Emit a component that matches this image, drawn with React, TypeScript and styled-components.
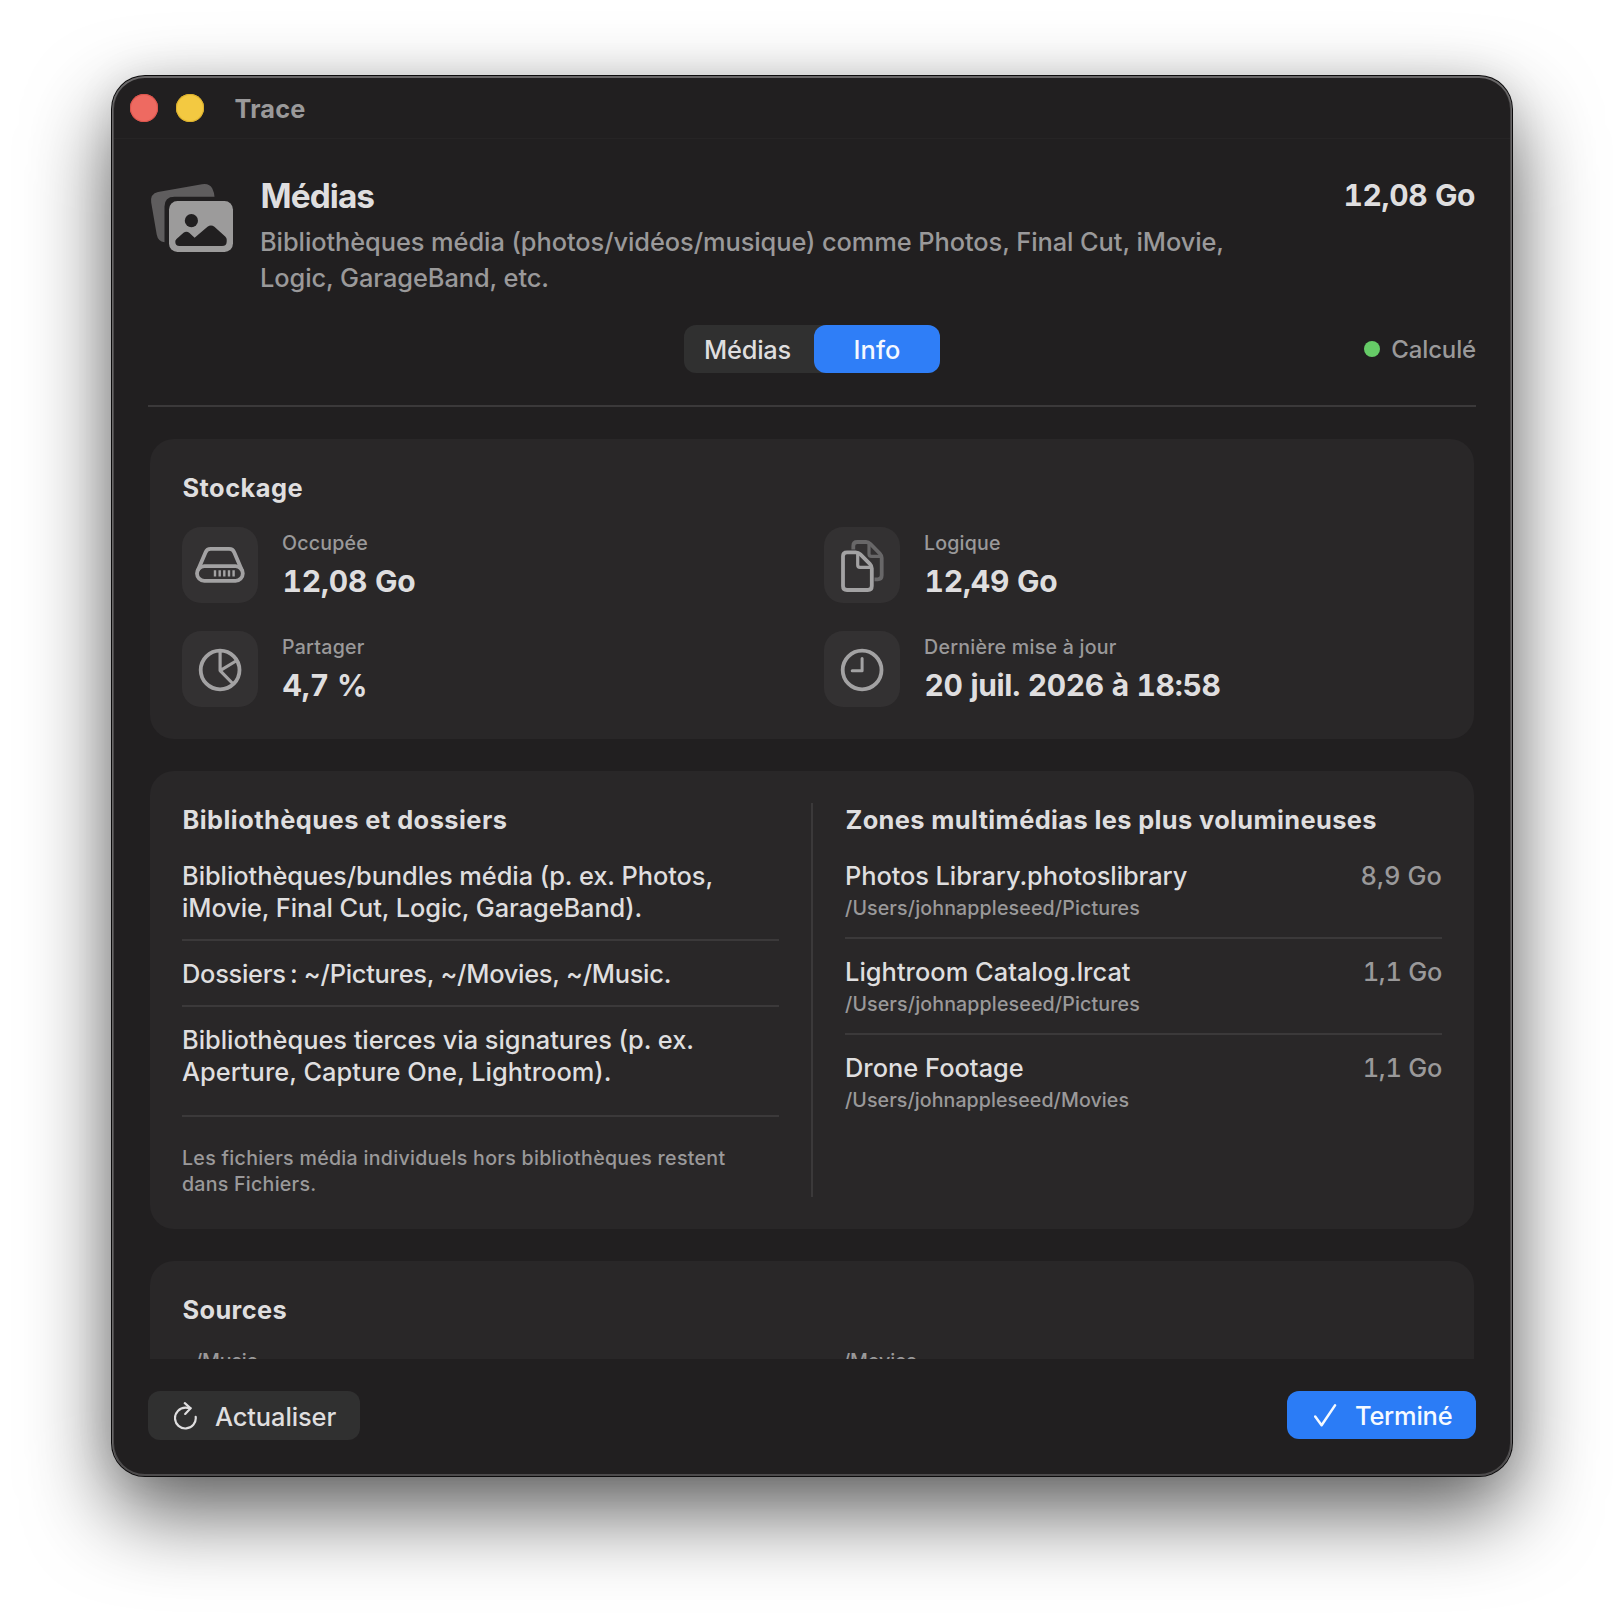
import React from "react";
import styled, { createGlobalStyle } from "styled-components";

const color = {
  window: "#211f20",
  card: "#292728",
  tile: "#333132",
  line: "#3b393a",
  control: "#303030",
  text: "#dfdedf",
  muted: "#9a999a",
  icon: "#a3a2a3",
  accent: "#2f7ef7",
};

const GlobalStyle = createGlobalStyle`
  *, *::before, *::after { box-sizing: border-box; }
  body {
    margin: 0;
    background: #fff;
    color: ${color.text};
    font-family: Inter, "Liberation Sans", sans-serif;
    font-size: 25.4px;
    font-weight: 460;
    line-height: 32px;
    overflow: hidden;
  }
  svg { display: block; flex: none; }
`;

const Desktop = styled.main`
  width: 1624px;
  height: 1624px;
  padding: 76px 112px 148px;
`;

const Window = styled.section`
  width: 1400px;
  height: 1400px;
  display: flex;
  flex-direction: column;
  border-radius: 33px;
  background: ${color.window};
  box-shadow:
    inset 0 1px 0 1px rgba(255, 255, 255, 0.16),
    inset 0 0 0 2px rgba(255, 255, 255, 0.2),
    0 0 0 1px #0c0b0c,
    0 0 40px rgba(0, 0, 0, 0.08),
    0 36px 84px rgba(0, 0, 0, 0.63);
`;

const TitleBar = styled.header`
  height: 63px;
  margin: 0 2px;
  padding: 2px 0 0 16px;
  display: flex;
  align-items: center;
  gap: 18px;
  border-bottom: 1px solid #262425;
`;

const Light = styled.span<{ $fill: string; $edge: string }>`
  width: 28px;
  height: 28px;
  border-radius: 50%;
  background: ${(p) => p.$fill};
  box-shadow: inset 0 0 0 1px ${(p) => p.$edge};
`;

const Text = styled.span<{ $ls?: number }>`
  display: block;
  white-space: pre;
  letter-spacing: ${(p) => p.$ls ?? 0}px;
`;

const AppName = styled(Text)`
  margin-left: 12.5px;
  padding-top: 2px;
  font-size: 25.3px;
  font-weight: 700;
  color: ${color.muted};
`;

const Content = styled.div`
  flex: 1;
  padding: 37px 36px 0;
`;

const Summary = styled.div`
  display: flex;
  gap: 24px;
  height: 120px;
`;

const SummaryIcon = styled.div`
  padding-top: 4px;
`;

const SummaryText = styled.div`
  flex: 1;
`;

const Title = styled(Text)`
  padding-left: 0.6px;
  font-size: 33.4px;
  line-height: 40px;
  font-weight: 660;
`;

const Description = styled.div`
  margin-top: 8px;
  line-height: 36px;
  color: ${color.muted};
`;

const Total = styled(Text)`
  margin: -1px 1px 0 0;
  font-size: 30px;
  line-height: 40px;
  font-weight: 650;
  font-variant-numeric: tabular-nums;
`;

const Toolbar = styled.div`
  margin-top: 29px;
  display: grid;
  grid-template-columns: 1fr auto 1fr;
  align-items: center;
`;

const Segments = styled.div`
  grid-column: 2;
  display: flex;
  height: 48px;
  border-radius: 12px;
  background: ${color.control};
`;

const Segment = styled.div<{ $active?: boolean }>`
  width: ${(p) => (p.$active ? 126 : 130)}px;
  padding: 1px 3px 0 0;
  display: flex;
  align-items: center;
  justify-content: center;
  border-radius: 12px;
  ${(p) => p.$active && `background: ${color.accent}; color: #f4f8ff; padding-right: 0;`}
`;

const Status = styled.div`
  justify-self: end;
  display: flex;
  align-items: center;
  gap: 11px;
  font-size: 24px;
  color: ${color.muted};
`;

const StatusLabel = styled(Text)`
  padding-top: 1px;
`;

const Dot = styled.span`
  width: 16px;
  height: 16px;
  border-radius: 50%;
  background: #66cb67;
`;

const Rule = styled.hr<{ $before: number; $after: number }>`
  height: 2px;
  border: 0;
  margin: ${(p) => p.$before}px 0 ${(p) => p.$after}px;
  background: ${color.line};
`;

const Scroll = styled.div`
  height: 920px;
  margin: 0 2px;
  overflow: hidden;
  display: flex;
  flex-direction: column;
  gap: 32px;
`;

const Card = styled.section`
  flex: none;
  padding: 32px;
  border-radius: 24px;
  background: ${color.card};
`;

const Heading = styled(Text)`
  padding-left: 0.4px;
  line-height: 34px;
  font-weight: 720;
`;

const Stats = styled.div`
  margin-top: 22px;
  display: grid;
  grid-template-columns: 1fr 1fr;
  gap: 28px 24px;
`;

const Stat = styled.div`
  height: 76px;
  display: flex;
  gap: 24px;
`;

const Tile = styled.div`
  width: 76px;
  height: 76px;
  border-radius: 19px;
  background: ${color.tile};
  color: ${color.icon};
`;

const StatText = styled.div`
  padding-top: 3px;
`;

const Caption = styled(Text)`
  font-size: 19.6px;
  line-height: 26px;
  color: ${color.muted};
`;

const StatValue = styled(Text)`
  margin-top: 5px;
  padding-left: 0.5px;
  font-size: 30px;
  line-height: 40px;
  font-weight: 660;
  font-variant-numeric: tabular-nums;
`;

const SplitCard = styled(Card)`
  display: flex;
  gap: 32px;
`;

const Column = styled.div`
  flex: 1;
`;

const VerticalRule = styled.div`
  width: 2px;
  background: ${color.line};
`;

const Body = styled.div`
  padding-top: 23px;
`;

const Area = styled.div`
  display: flex;
  justify-content: space-between;
`;

const AreaPath = styled(Caption)`
  margin-top: 3px;
`;

const AreaSize = styled(Text)`
  color: ${color.muted};
  font-variant-numeric: tabular-nums;
`;

const Sources = styled.div`
  margin-top: 21px;
  display: grid;
  grid-template-columns: 1fr 1fr;
  gap: 36px;
`;

const Footer = styled.footer`
  margin-top: 32px;
  display: flex;
  justify-content: space-between;
  align-items: flex-start;
`;

const Button = styled.button<{ $primary?: boolean }>`
  width: ${(p) => (p.$primary ? 189 : 212)}px;
  height: ${(p) => (p.$primary ? 48 : 49)}px;
  padding: 0 0 0 ${(p) => (p.$primary ? 27 : 26)}px;
  display: flex;
  align-items: center;
  gap: ${(p) => (p.$primary ? 18 : 17)}px;
  border: 0;
  border-radius: 12px;
  font: inherit;
  background: ${(p) => (p.$primary ? "#2b7cf6" : color.control)};
  color: ${(p) => (p.$primary ? "#f6faff" : color.text)};
`;

const ButtonLabel = styled(Text)<{ $drop: number }>`
  padding-top: ${(p) => p.$drop}px;
`;

const PhotosIcon = () => (
  <svg width="88" height="76" viewBox="148 180 88 76">
    <path
      fill="#5f5d5e"
      d="M214.5 196.7H174.5Q164.5 196.7 164.5 206.5V242.3Q158 241.5 156.7 234.5L151.2 202.5Q150 193.8 158 192L202 184.2Q209.5 183 212.3 188.5Q214.2 192.5 214.5 196.7Z"
    />
    <rect x="169" y="201" width="64" height="51" rx="8.5" fill="#9c9b9b" />
    <circle cx="191.4" cy="220.7" r="6.6" fill={color.window} />
    <path
      fill={color.window}
      d="M175.3 242Q175 240.5 176.5 239L183.5 232.8Q186.5 230.6 189.5 233L194.6 237.8L207.5 226.8Q211 224.3 214.4 226.8L225.2 236.4Q226.7 237.9 226.7 239.6V241.5Q226.7 246 222 246H179.5Q175.4 246 175.3 242Z"
    />
  </svg>
);

const DriveIcon = () => (
  <svg width="76" height="76" viewBox="0 0 76 76" fill="none" stroke="currentColor" strokeWidth="3.8">
    <rect x="15" y="39.2" width="45.8" height="14.6" rx="7.3" />
    <path d="M15.8 43.5L23.6 25.2Q25 21.9 28.6 21.9H47.2Q50.8 21.9 52.2 25.2L60 43.5" />
    <path strokeWidth="2.4" d="M33 43.3v6.2M37.7 43.3v6.2M42.3 43.3v6.2M47 43.3v6.2M51.6 43.3v6.2" />
  </svg>
);

const PieIcon = () => (
  <svg width="76" height="76" viewBox="0 0 76 76" fill="none" stroke="currentColor" strokeWidth="3.8">
    <circle cx="38.1" cy="39" r="19.4" />
    <path strokeWidth="3.2" strokeLinejoin="round" d="M38.1 20V39.6L54 30M38.1 39.6L51.2 53" />
  </svg>
);

const DocsIcon = () => (
  <svg width="76" height="76" viewBox="0 0 76 76" fill="none" strokeWidth="3.8" strokeLinejoin="round">
    <g stroke="#686768">
      <path d="M29.3 22.5V19Q29.3 15 33.3 15H42Q44.5 15 46.5 17L55.8 26.5Q57.7 28.5 57.7 31V48.3Q57.7 52.3 53.7 52.3H50.5" />
      <path strokeWidth="3.2" d="M45 16.5V27Q45 29.3 47.5 29.3H57" />
    </g>
    <g stroke={color.icon}>
      <path d="M23 25.3H31.6Q34.4 25.3 36.4 27.3L45.8 36.8Q47.8 38.8 47.8 41.6V59Q47.8 63 43.8 63H23Q19 63 19 59V29.3Q19 25.3 23 25.3Z" />
      <path strokeWidth="3.2" d="M33.7 26.5V38Q33.7 40.3 36 40.3H47" />
    </g>
  </svg>
);

const ClockIcon = () => (
  <svg width="76" height="76" viewBox="0 0 76 76" fill="none" stroke="currentColor" strokeWidth="3.8">
    <circle cx="38.1" cy="39" r="19.4" />
    <path strokeWidth="3" strokeLinecap="round" strokeLinejoin="round" d="M38.1 27.4V39.8H28.2" />
  </svg>
);

const RefreshIcon = () => (
  <svg width="24" height="28" viewBox="0 0 24 28" fill="none" stroke="currentColor" strokeWidth="2.2" strokeLinecap="round" strokeLinejoin="round">
    <path d="M21.7 14.8A10.4 10.4 0 1 1 11.4 5.7Q14 5.7 16.4 6.2" />
    <path d="M10.8 1.2L16.6 6.3L11.2 11.9" />
  </svg>
);

const CheckIcon = () => (
  <svg width="23" height="24" viewBox="0 0 23 24" fill="none" stroke="currentColor" strokeWidth="2.5" strokeLinecap="round" strokeLinejoin="round">
    <path d="M1.2 13.6L7.6 22.2L21 2.4" />
  </svg>
);

const stats = [
  { icon: <DriveIcon />, label: "Occupée", labelLs: 0.2, value: "12,08 Go", valueLs: -0.2 },
  { icon: <DocsIcon />, label: "Logique", labelLs: 0.18, value: "12,49 Go", valueLs: -0.2 },
  { icon: <PieIcon />, label: "Partager", labelLs: 0.25, value: "4,7 %", valueLs: -0.1 },
  { icon: <ClockIcon />, label: "Dernière mise à jour", labelLs: 0.24, value: "20 juil. 2026 à 18:58", valueLs: -0.32 },
];

const areas = [
  { name: "Photos Library.photoslibrary", ls: -0.07, path: "/Users/johnappleseed/Pictures", pathLs: 0.14, size: "8,9 Go", sizeLs: 0.1 },
  { name: "Lightroom Catalog.lrcat", ls: 0.03, path: "/Users/johnappleseed/Pictures", pathLs: 0.14, size: "1,1 Go", sizeLs: -0.25 },
  { name: "Drone Footage", ls: 0.02, path: "/Users/johnappleseed/Movies", pathLs: 0.08, size: "1,1 Go", sizeLs: -0.25 },
];

export default function App() {
  return (
    <Desktop>
      <GlobalStyle />
      <Window>
        <TitleBar>
          <Light $fill="#ee6a61" $edge="#dd544c" />
          <Light $fill="#f3c941" $edge="#dcb02c" />
          <AppName $ls={0.2}>Trace</AppName>
        </TitleBar>
        <Content>
          <Summary>
            <SummaryIcon>
              <PhotosIcon />
            </SummaryIcon>
            <SummaryText>
              <Title $ls={-0.95}>Médias</Title>
              <Description>
                <Text $ls={-0.07}>Bibliothèques média (photos/vidéos/musique) comme Photos, Final Cut, iMovie,</Text>
                <Text $ls={-0.08}>Logic, GarageBand, etc.</Text>
              </Description>
            </SummaryText>
            <Total $ls={-0.4}>12,08 Go</Total>
          </Summary>
          <Toolbar>
            <Segments>
              <Segment>
                <Text $ls={-0.2}>Médias</Text>
              </Segment>
              <Segment $active>
                <Text $ls={0.1}>Info</Text>
              </Segment>
            </Segments>
            <Status>
              <Dot />
              <StatusLabel $ls={-0.15}>Calculé</StatusLabel>
            </Status>
          </Toolbar>
          <Rule $before={32} $after={32} />
          <Scroll>
            <Card>
              <Heading $ls={0.5}>Stockage</Heading>
              <Stats>
                {stats.map((s) => (
                  <Stat key={s.label}>
                    <Tile>{s.icon}</Tile>
                    <StatText>
                      <Caption $ls={s.labelLs}>{s.label}</Caption>
                      <StatValue $ls={s.valueLs}>{s.value}</StatValue>
                    </StatText>
                  </Stat>
                ))}
              </Stats>
            </Card>
            <SplitCard>
              <Column>
                <Heading $ls={0.46}>Bibliothèques et dossiers</Heading>
                <Body>
                  <Text $ls={-0.05}>Bibliothèques/bundles média (p. ex. Photos,</Text>
                  <Text $ls={-0.09}>iMovie, Final Cut, Logic, GarageBand).</Text>
                  <Rule $before={15} $after={17} />
                  <Text $ls={-0.26}>{"Dossiers\u202f: ~/Pictures, ~/Movies, ~/Music."}</Text>
                  <Rule $before={15} $after={17} />
                  <Text $ls={-0.03}>Bibliothèques tierces via signatures (p. ex.</Text>
                  <Text $ls={0.02}>Aperture, Capture One, Lightroom).</Text>
                  <Rule $before={27} $after={28} />
                  <Caption $ls={0.29}>Les fichiers média individuels hors bibliothèques restent</Caption>
                  <Caption $ls={0.25}>dans Fichiers.</Caption>
                </Body>
              </Column>
              <VerticalRule />
              <Column>
                <Heading $ls={0.38}>Zones multimédias les plus volumineuses</Heading>
                <Body>
                  {areas.map((a, i) => (
                    <React.Fragment key={a.name}>
                      {i > 0 && <Rule $before={16} $after={17} />}
                      <Area>
                        <Text $ls={a.ls}>{a.name}</Text>
                        <AreaSize $ls={a.sizeLs}>{a.size}</AreaSize>
                      </Area>
                      <AreaPath $ls={a.pathLs}>{a.path}</AreaPath>
                    </React.Fragment>
                  ))}
                </Body>
              </Column>
            </SplitCard>
            <Card>
              <Heading $ls={0.4}>Sources</Heading>
              <Sources>
                <Caption $ls={-0.15}>~/Music</Caption>
                <Caption $ls={-0.15}>~/Movies</Caption>
              </Sources>
            </Card>
          </Scroll>
          <Footer>
            <Button>
              <RefreshIcon />
              <ButtonLabel $drop={2} $ls={-0.08}>Actualiser</ButtonLabel>
            </Button>
            <Button $primary>
              <CheckIcon />
              <ButtonLabel $drop={1} $ls={-0.2}>Terminé</ButtonLabel>
            </Button>
          </Footer>
        </Content>
      </Window>
    </Desktop>
  );
}
